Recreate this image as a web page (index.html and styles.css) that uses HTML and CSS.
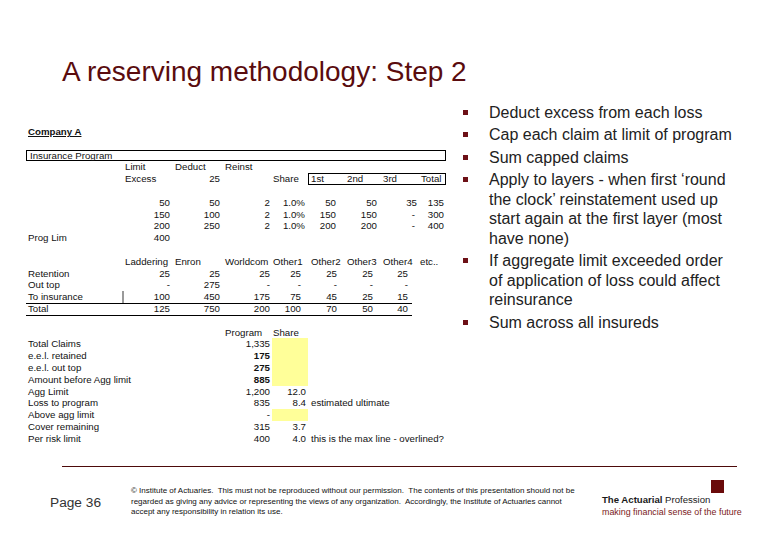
FILE: index.html
```html
<!DOCTYPE html>
<html>
<head>
<meta charset="utf-8">
<link rel="stylesheet" href="styles.css">
</head>
<body>
<div class="slide">
  <h1 class="title">A reserving methodology: Step 2</h1>
  <div class="main">
    <div class="sheet">
      <div class="row"><span class="co">Company A</span></div>
      <div class="row"></div>
      <div class="row box">Insurance Program</div>
      <div class="row gA"><span></span><span class="t">Limit</span><span class="t">Deduct</span><span class="t">Reinst</span></div>
      <div class="row gA"><span></span><span class="t">Excess</span><span class="n">25</span><span></span><span class="t1">Share</span>
        <div class="layers"><span class="t">1st</span><span class="t">2nd</span><span class="t">3rd</span><span class="t">Total</span></div>
      </div>
      <div class="row"></div>
      <div class="row gA"><span></span><span class="n">50</span><span class="n">50</span><span class="n">2</span><span class="n p3">1.0%</span><span class="n p8">50</span><span class="n p3">50</span><span class="n p1">35</span><span class="n">135</span></div>
      <div class="row gA"><span></span><span class="n">150</span><span class="n">100</span><span class="n">2</span><span class="n p3">1.0%</span><span class="n p8">150</span><span class="n p3">150</span><span class="n p3">-</span><span class="n">300</span></div>
      <div class="row gA"><span></span><span class="n">200</span><span class="n">250</span><span class="n">2</span><span class="n p3">1.0%</span><span class="n p8">200</span><span class="n p3">200</span><span class="n p3">-</span><span class="n">400</span></div>
      <div class="row gA"><span class="lab">Prog Lim</span><span class="n">400</span></div>
      <div class="row"></div>
      <div class="row gB"><span></span><span class="t">Laddering</span><span class="t">Enron</span><span class="t">Worldcom</span><span class="t1">Other1</span><span class="t">Other2</span><span class="t">Other3</span><span class="t">Other4</span><span class="t8">etc..</span></div>
      <div class="row gB"><span class="lab">Retention</span><span class="n">25</span><span class="n">25</span><span class="n">25</span><span class="n p7">25</span><span class="n p7">25</span><span class="n p7">25</span><span class="n p4">25</span></div>
      <div class="row gB"><span class="lab">Out top</span><span class="n">-</span><span class="n">275</span><span class="n">-</span><span class="n p7">-</span><span class="n p7">-</span><span class="n p7">-</span><span class="n p4">-</span></div>
      <div class="row gB ruled"><span class="lab">To insurance</span><span class="n bar">100</span><span class="n">450</span><span class="n">175</span><span class="n p7">75</span><span class="n p7">45</span><span class="n p7">25</span><span class="n p4">15</span></div>
      <div class="row gB ruled"><span class="lab">Total</span><span class="n">125</span><span class="n">750</span><span class="n">200</span><span class="n p7">100</span><span class="n p7">70</span><span class="n p7">50</span><span class="n p4">40</span></div>
      <div class="row"></div>
      <div class="row gC"><span></span><span class="t">Program</span><span class="t1">Share</span></div>
      <div class="row gC"><span class="lab">Total Claims</span><span class="n">1,335</span><span class="hl"></span></div>
      <div class="row gC"><span class="lab">e.e.l. retained</span><span class="n b">175</span><span class="hl"></span></div>
      <div class="row gC"><span class="lab">e.e.l. out top</span><span class="n b">275</span><span class="hl"></span></div>
      <div class="row gC"><span class="lab">Amount before Agg limit</span><span class="n b">885</span><span class="hl"></span></div>
      <div class="row gC"><span class="lab">Agg Limit</span><span class="n">1,200</span><span class="n">12.0</span></div>
      <div class="row gC"><span class="lab">Loss to program</span><span class="n">835</span><span class="n">8.4</span><span class="note">estimated ultimate</span></div>
      <div class="row gC"><span class="lab">Above agg limit</span><span class="n">-</span><span class="hl"></span></div>
      <div class="row gC"><span class="lab">Cover remaining</span><span class="n">315</span><span class="n">3.7</span></div>
      <div class="row gC"><span class="lab">Per risk limit</span><span class="n">400</span><span class="n">4.0</span><span class="note">this is the max line - overlined?</span></div>
    </div>
    <ul class="bullets">
      <li><span class="mark"></span><span class="txt">Deduct excess from each loss</span></li>
      <li><span class="mark"></span><span class="txt">Cap each claim at limit of program</span></li>
      <li><span class="mark"></span><span class="txt">Sum capped claims</span></li>
      <li><span class="mark"></span><span class="txt">Apply to layers - when first ‘round the clock’ reinstatement used up start again at the first layer (most have none)</span></li>
      <li><span class="mark"></span><span class="txt">If aggregate limit exceeded order of application of loss could affect reinsurance</span></li>
      <li><span class="mark"></span><span class="txt">Sum across all insureds</span></li>
    </ul>
  </div>
  <div class="rule"></div>
  <div class="footer">
    <div class="page">Page 36</div>
    <div class="copy">© Institute of Actuaries.&nbsp; This must not be reproduced without our permission.&nbsp; The contents of this presentation should not be<br>regarded as giving any advice or representing the views of any organization.&nbsp; Accordingly, the Institute of Actuaries cannot<br>accept any responsibility in relation its use.</div>
    <div class="logo">
      <div class="sq"></div>
      <div class="prof"><b>The Actuarial</b> Profession</div>
      <div class="motto">making financial sense of the future</div>
    </div>
  </div>
</div>
</body>
</html>
```

FILE: styles.css
```css
* { box-sizing: border-box; }
body {
  margin: 0;
  background: #fff;
  font-family: "Liberation Sans", Arial, sans-serif;
}
.slide {
  width: 780px;
  height: 540px;
  overflow: hidden;
  background: #fff;
}
.title {
  margin: 0;
  padding: 56px 0 0 62px;
  height: 88px;
  font-size: 28px;
  line-height: 32px;
  font-weight: normal;
  color: #5a0c0e;
}
.main {
  display: flex;
  align-items: flex-start;
  height: 378px;
}
/* spreadsheet */
.sheet {
  margin-left: 26px;
  padding-top: 38px;
  width: 420px;
  flex: 0 0 420px;
  font-size: 9.7px;
  color: #111;
}
.row {
  height: 11.8px;
  line-height: 11.8px;
  white-space: nowrap;
}
.co {
  padding-left: 2px;
  font-weight: bold;
  text-decoration: underline;
}
.box {
  width: 420px;
  padding-left: 4px;
  box-shadow: inset 0 0 0 1px #000;
}
.gA {
  display: grid;
  grid-template-columns: 96px 50px 50px 50px 36px 36px 36px 38px 28px;
}
.gB {
  display: grid;
  grid-template-columns: 96px 50px 50px 50px 36px 36px 36px 32px 34px;
}
.gC {
  display: grid;
  grid-template-columns: 196px 50px 36px 150px;
}
.layers {
  grid-column: 6 / 10;
  display: grid;
  grid-template-columns: 36px 36px 38px 28px;
  box-shadow: inset 0 0 0 1px #000;
}
.t { padding-left: 3px; }
.t1 { padding-left: 1px; }
.t8 { padding-left: 8px; }
.lab { padding-left: 2px; }
.n { text-align: right; padding-right: 2px; }
.n.p1 { padding-right: 1px; }
.n.p3 { padding-right: 3px; }
.n.p4 { padding-right: 4px; }
.n.p7 { padding-right: 7px; }
.n.p8 { padding-right: 8px; }
.b { font-weight: bold; }
.bar { box-shadow: inset 2px 0 0 #9a9a9a; }
.ruled {
  width: 386px;
  box-shadow: 0 1px 0 #000;
}
.hl { background: #ffff99; }
.note { padding-left: 3px; }

/* bullets */
.bullets {
  list-style: none;
  margin: 0 0 0 17px;
  padding: 14.6px 0 0 0;
}
.bullets li {
  display: flex;
  margin-bottom: 3px;
  font-size: 16px;
  line-height: 19.5px;
  color: #222;
}
.mark { flex: 0 0 26px; }
.mark::before {
  content: "";
  display: block;
  width: 5px;
  height: 5px;
  margin-top: 7px;
  background: #6d1016;
}
.txt { width: 246px; }

/* footer */
.rule {
  margin-left: 62px;
  width: 675px;
  height: 1px;
  background: #4d0a0a;
}
.footer {
  display: flex;
  align-items: flex-start;
  height: 73px;
}
.page {
  margin: 28px 0 0 50px;
  width: 81px;
  flex: 0 0 81px;
  font-size: 13.7px;
  line-height: 16px;
  color: #333;
}
.copy {
  margin-top: 19px;
  width: 471px;
  flex: 0 0 471px;
  font-size: 8px;
  line-height: 10.5px;
  white-space: nowrap;
  color: #111;
}
.logo {
  margin-top: 13px;
  width: 142px;
}
.sq {
  margin-left: 109px;
  width: 13px;
  height: 13px;
  background: #6a0a0a;
}
.prof {
  margin-top: 2px;
  font-size: 9.6px;
  line-height: 10px;
  color: #1a1a1a;
}
.motto {
  margin-top: 1px;
  font-size: 8.9px;
  line-height: 12px;
  color: #7a1a1a;
}
```
